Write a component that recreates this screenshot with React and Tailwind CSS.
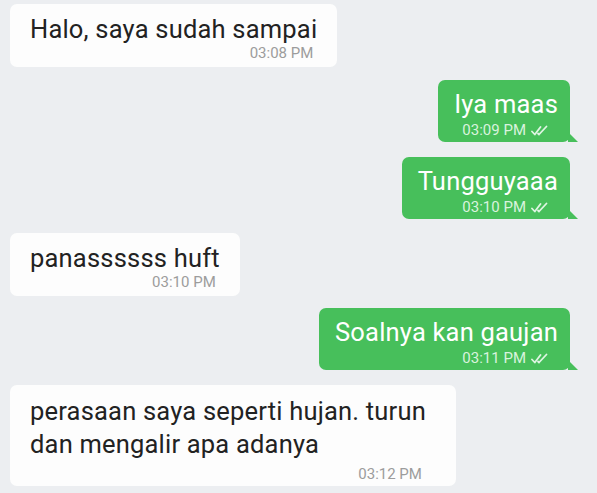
import React from "react";

const messages = [
  { side: "in", lines: ["Halo, saya sudah sampai"], time: "03:08 PM", mt: "mt-[4px]" },
  { side: "out", lines: ["Iya maas"], time: "03:09 PM", mt: "mt-[13px]" },
  { side: "out", lines: ["Tungguyaaa"], time: "03:10 PM", mt: "mt-[15px]" },
  { side: "in", lines: ["panassssss huft"], time: "03:10 PM", mt: "mt-[14px]" },
  { side: "out", lines: ["Soalnya kan gaujan"], time: "03:11 PM", mt: "mt-[12px]" },
  {
    side: "in",
    lines: ["perasaan saya seperti hujan. turun", "dan mengalir apa adanya"],
    time: "03:12 PM",
    mt: "mt-[15px]",
  },
];

const DoubleCheck = () => (
  <svg width="18" height="11" viewBox="0 0 18 11" fill="none" className="ml-[5px]">
    <path d="M1 6.5 L3.8 9.5 L9.5 2" stroke="#dff5e3" strokeWidth="1.8" strokeLinecap="round" strokeLinejoin="round" />
    <path d="M7 8.5 L8 9.5 L15.5 1.5" stroke="#dff5e3" strokeWidth="1.8" strokeLinecap="round" strokeLinejoin="round" />
  </svg>
);

const Bubble = ({ msg }) => {
  if (msg.side === "out") {
    return (
      <div className={`${msg.mt} self-end mr-[27px] relative`}>
        <div className="bg-[#47bf5b] rounded-[7px] pl-[16px] pr-[12px] pt-[9px] pb-[3px] flex flex-col items-end">
          {msg.lines.map((l) => (
            <div key={l} className="text-[25.5px] tracking-[0.2px] leading-[30px] text-white whitespace-nowrap">
              {l}
            </div>
          ))}
          <div className="flex items-center mt-[2px] pr-[9px] text-[15px] leading-[18px] text-[#d9f3de]">
            {msg.time}
            <DoubleCheck />
          </div>
        </div>
        <svg width="10" height="10" viewBox="0 0 10 10" className="absolute right-[-8px] bottom-0">
          <path d="M0 0 L10 10 L0 10 Z" fill="#47bf5b" />
        </svg>
      </div>
    );
  }
  const multi = msg.lines.length > 1;
  return (
    <div
      className={`${msg.mt} self-start ml-[10px] bg-[#fdfdfd] rounded-[7px] pl-[20px] pt-[10px] flex flex-col ${
        multi ? "pb-[3px] pr-[30px]" : "pb-[5px] pr-[20px]"
      }`}
    >
      {msg.lines.map((l) => (
        <div
          key={l}
          className={`text-[25.5px] tracking-[0.2px] text-[#222] whitespace-nowrap ${multi ? "leading-[33px]" : "leading-[30px]"}`}
        >
          {l}
        </div>
      ))}
      <div className={`self-end pr-[4px] text-[15px] leading-[18px] text-[#9c9c9c] ${multi ? "mt-[4px]" : ""}`}>
        {msg.time}
      </div>
    </div>
  );
};

export default function App() {
  return (
    <div
      className="w-[597px] h-[493px] bg-[#eceef1] flex flex-col overflow-hidden"
      style={{ fontFamily: "Roboto, 'Noto Sans', sans-serif" }}
    >
      {messages.map((m, i) => (
        <Bubble key={i} msg={m} />
      ))}
    </div>
  );
}
